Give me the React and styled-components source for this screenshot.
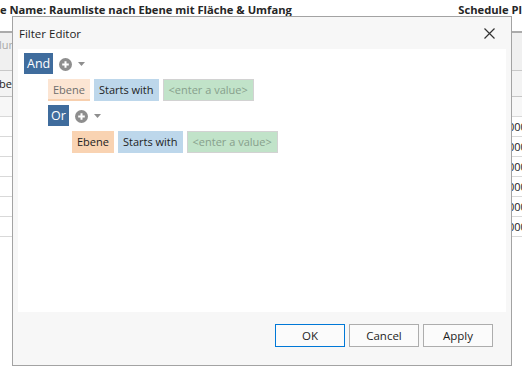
import React from 'react';
import styled, { createGlobalStyle, css } from 'styled-components';

const Global = createGlobalStyle`
  html, body { margin: 0; padding: 0; background: #fff; }
  body {
    font-family: "Open Sans", "Noto Sans", "DejaVu Sans", sans-serif;
    width: 522px; height: 376px; overflow: hidden;
  }
`;

const Page = styled.div`
  position: relative;
  width: 522px;
  height: 376px;
  overflow: hidden;
  background: #fff;
`;

const Header = styled.div`
  height: 33px;
  border-bottom: 2px solid #ababab;
  display: flex;
  justify-content: space-between;
  align-items: flex-start;
  padding-top: 1px;
  box-sizing: border-box;
  font-weight: 700;
  font-size: 11.2px;
  line-height: 18px;
  color: #262626;
  white-space: nowrap;
  overflow: hidden;
`;

const HeaderText = styled.span``;

const ToolBand = styled.div`
  height: 38px;
  background: #f0f0f0;
  border-bottom: 1px solid #c8c8c8;
  font-size: 11px;
  line-height: 16px;
  color: #a8a8a8;
  padding-top: 4px;
  box-sizing: border-box;
  white-space: nowrap;
`;

const GridRow = styled.div`
  height: ${(p) => p.$h}px;
  box-sizing: border-box;
  border-bottom: 1px solid ${(p) => (p.$head ? '#c6c6c6' : '#d9d9d9')};
  background: ${(p) => (p.$head ? '#f3f3f3' : p.$band ? '#f7f7f7' : '#fff')};
  display: flex;
  justify-content: space-between;
  align-items: center;
  font-size: 11px;
  color: #222;
  white-space: nowrap;
  overflow: hidden;
`;

const Cell = styled.span`
  margin-left: ${(p) => p.$ml || 0}px;
`;

const NumCell = styled.span`
  width: 14px;
  overflow: hidden;
`;

const Dialog = styled.div`
  position: absolute;
  left: 12px;
  top: 16px;
  width: 500px;
  height: 350px;
  box-sizing: border-box;
  border: 1px solid #a3a3a3;
  background: #f7f7f7;
  display: flex;
  flex-direction: column;
`;

const TitleBar = styled.div`
  height: 32px;
  flex: none;
  display: flex;
  align-items: center;
  justify-content: space-between;
  padding: 0 16px 0 6px;
  font-size: 11.5px;
  color: #1e1e1e;
`;

const CloseBtn = styled.button`
  border: 0;
  background: transparent;
  padding: 0;
  width: 11px;
  height: 11px;
  display: flex;
`;

const Panel = styled.div`
  flex: none;
  height: 263px;
  margin: 0 5px;
  background: #fff;
  padding: 4px 6px;
  box-sizing: border-box;
`;

const Row = styled.div`
  display: flex;
  align-items: center;
  gap: 4px;
  height: 22px;
  margin-bottom: 4px;
  padding-left: ${(p) => p.$level * 24}px;
`;

const GroupOp = styled.span`
  height: 21px;
  padding: 0 3px;
  background: #3f6c9d;
  color: #fff;
  font-size: 12.5px;
  line-height: 21px;
  align-self: flex-start;
`;

const AddWrap = styled.span`
  display: flex;
  align-items: center;
  gap: 6px;
  margin-left: 2px;
`;

const chipVariants = {
  fieldDim: css`
    background: #fce5d3;
    color: #6d6d6d;
    box-shadow: inset 0 -2px 0 #f7cfae;
  `,
  field: css`
    background: #f9d3b2;
    color: #222;
  `,
  op: css`
    background: #bdd7eb;
    color: #1e1e1e;
  `,
  value: css`
    background: #c1e3c9;
    color: #879f8c;
    border: 1px solid #d2d2d2;
  `,
};

const Chip = styled.span`
  height: 22px;
  box-sizing: border-box;
  padding: 0 5px;
  font-size: 11px;
  line-height: 20px;
  display: flex;
  align-items: center;
  white-space: nowrap;
  ${(p) => chipVariants[p.$variant]}
`;

const Footer = styled.div`
  flex: 1;
  display: flex;
  justify-content: flex-end;
  align-items: flex-start;
  gap: 4px;
  padding: 12px 18px 0 0;
`;

const Button = styled.button`
  width: 70px;
  height: 23px;
  box-sizing: border-box;
  border: 1px solid ${(p) => (p.$primary ? '#0078d7' : '#adadad')};
  background: #fbfbfb;
  font-family: inherit;
  font-size: 11.5px;
  color: #1e1e1e;
  padding: 0;
`;

function AddIcon() {
  return (
    <AddWrap>
      <svg width="13" height="13" viewBox="0 0 13 13">
        <circle cx="6.5" cy="6.5" r="6.5" fill="#8e8e8e" />
        <path d="M6.5 3.2v6.6M3.2 6.5h6.6" stroke="#fff" strokeWidth="2" />
      </svg>
      <svg width="7" height="4" viewBox="0 0 7 4">
        <path d="M0 0h7L3.5 4z" fill="#8e8e8e" />
      </svg>
    </AddWrap>
  );
}

function Condition({ level, dim }) {
  return (
    <Row $level={level}>
      <Chip $variant={dim ? 'fieldDim' : 'field'}>Ebene</Chip>
      <Chip $variant="op">Starts with</Chip>
      <Chip $variant="value">&lt;enter a value&gt;</Chip>
    </Row>
  );
}

const numbers = ['000', '000', '000', '000', '000', '000'];

export default function App() {
  return (
    <Page>
      <Global />
      <Header>
        <HeaderText>e Name: Raumliste nach Ebene mit Fläche &amp; Umfang</HeaderText>
        <HeaderText>Schedule Pl</HeaderText>
      </Header>
      <ToolBand>
        <Cell $ml={-1}>lumn</Cell>
      </ToolBand>
      <GridRow $h={26} $head>
        <Cell $ml={-1}>bene</Cell>
        <span />
      </GridRow>
      <GridRow $h={20} $band />
      {numbers.map((n, i) => (
        <GridRow key={i} $h={20}>
          <span />
          <NumCell>{n}</NumCell>
        </GridRow>
      ))}

      <Dialog>
        <TitleBar>
          <span>Filter Editor</span>
          <CloseBtn aria-label="Close">
            <svg width="11" height="11" viewBox="0 0 11 11">
              <path d="M0.5 0.5l10 10M10.5 0.5l-10 10" stroke="#333" strokeWidth="1.2" />
            </svg>
          </CloseBtn>
        </TitleBar>
        <Panel>
          <Row $level={0}>
            <GroupOp>And</GroupOp>
            <AddIcon />
          </Row>
          <Condition level={1} dim />
          <Row $level={1}>
            <GroupOp>Or</GroupOp>
            <AddIcon />
          </Row>
          <Condition level={2} />
        </Panel>
        <Footer>
          <Button $primary>OK</Button>
          <Button>Cancel</Button>
          <Button>Apply</Button>
        </Footer>
      </Dialog>
    </Page>
  );
}
